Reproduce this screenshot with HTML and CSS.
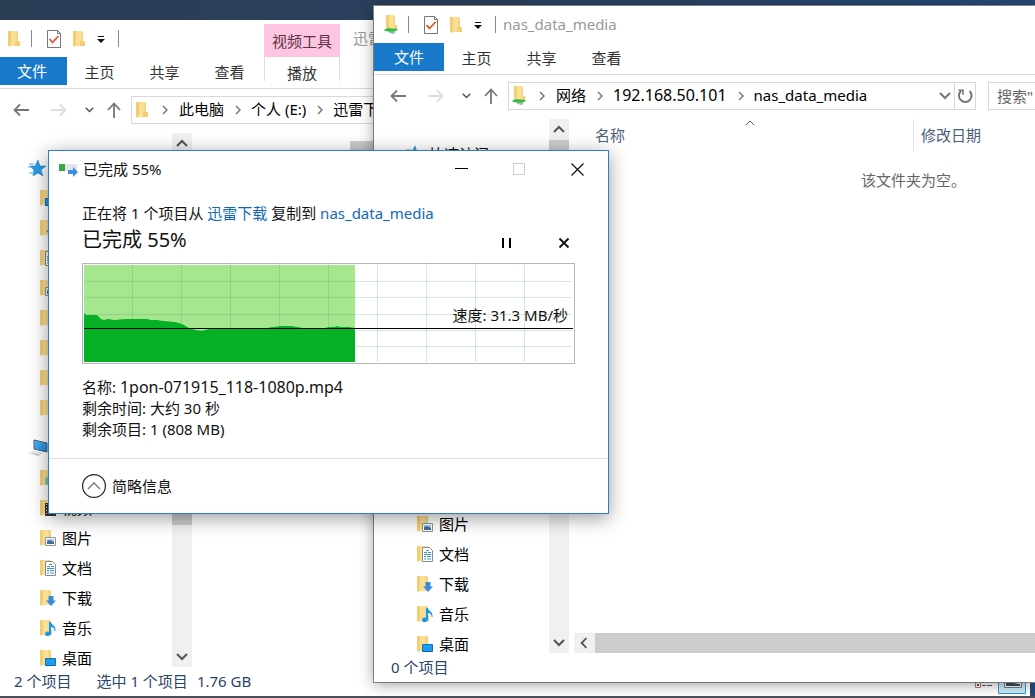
FILE: index.html
```
<!DOCTYPE html>
<html lang="zh-CN">
<head>
<meta charset="utf-8">
<title>nas_data_media</title>
<link rel="stylesheet" href="styles.css">
</head>
<body>
<svg class="sprite" aria-hidden="true">
  <defs>
    <linearGradient id="gold" x1="0" x2="1"><stop offset="0" stop-color="#f9dc8b"/><stop offset=".6" stop-color="#fbe09a"/><stop offset="1" stop-color="#edc664"/></linearGradient>
    <linearGradient id="screen" x1="0" y1="0" x2="1" y2="1"><stop offset="0" stop-color="#52b8f5"/><stop offset="1" stop-color="#1a84d8"/></linearGradient>
  </defs>
  <symbol id="folder" viewBox="0 0 16 16"><path d="M2 0h9l1 1v9h2v5H2z" fill="url(#gold)"/><path d="M2 0h3v11l-1 5-2-1z" fill="#f3cd72"/><path d="M9 10h5v5H9z" fill="#f1cd74"/></symbol>
  <symbol id="netfolder" viewBox="0 0 16 20"><path d="M3 0h8l1 1v9h2v4H3z" fill="url(#gold)"/><path d="M3 0h3v10l-1 4-2-1z" fill="#f3cd72"/><path d="M1 15l4-2 9 1 1 1-5 2-8-1z" fill="#38b84c"/><path d="M5 16h7l-1 3-4-1z" fill="#63c96c"/><path d="M7 17h6l-3 2z" fill="#a9b8b0"/></symbol>
  <symbol id="check" viewBox="0 0 16 18"><path d="M1.500.500h10l3 3v14h-13z" fill="#fff" stroke="#777"/><path d="M11.500.500v3h3" fill="none" stroke="#777"/><path d="M3.500 9l3 3.500 6-6.500" fill="none" stroke="#e0562b" stroke-width="1.800"/></symbol>
  <symbol id="more" viewBox="0 0 10 8"><path d="M2 1h6v1H2zM1 4h8L5 8z" fill="#111"/></symbol>
  <symbol id="back" viewBox="0 0 16 14"><path d="M16 7H1.500M7 1.500L1.500 7 7 12.500" fill="none" stroke="currentColor" stroke-width="1.800"/></symbol>
  <symbol id="up" viewBox="0 0 14 16"><path d="M7 16V1.500M1 8l6-6.500L13 8" fill="none" stroke="currentColor" stroke-width="1.800"/></symbol>
  <symbol id="right" viewBox="0 0 6 10"><path d="M1 1l4 4-4 4" fill="none" stroke="currentColor" stroke-width="1.500"/></symbol>
  <symbol id="down" viewBox="0 0 12 8"><path d="M1 1l5 5 5-5" fill="none" stroke="currentColor" stroke-width="2"/></symbol>
  <symbol id="reload" viewBox="0 0 16 16"><path d="M12.500 3A6.300 6.300 0 1 1 4 3" fill="none" stroke="currentColor" stroke-width="2"/><path d="M1.500 2.200h4.500v4.500" fill="none" stroke="currentColor" stroke-width="1.600"/></symbol>
  <symbol id="star" viewBox="0 0 20 18"><path d="M10 1l2 6 6 0-5 4 2 6-5-3-5 3 1-6-4-4h5z" fill="#2b9ce8" stroke="#1674ba" stroke-width=".5"/><path d="M1 5h5M0 8h3M1 14h4" stroke="#4fb0ee"/></symbol>
  <symbol id="pc" viewBox="0 0 20 18"><path d="M6 1l13 3v9L6 10z" fill="url(#screen)" stroke="#44607a"/><path d="M0 14l5-2 10 2-5 3z" fill="#c9cdd1"/><path d="M2 14l3-1 7 1.500" stroke="#fff" fill="none"/></symbol>
  <symbol id="plain" viewBox="0 0 16 16"><path d="M0 0h10l1 1v9h1v5H0z" fill="url(#gold)"/><path d="M0 0h3v11l-1 5-2-1z" fill="#f3cd72"/></symbol>
  <symbol id="pictures" viewBox="0 0 16 16"><use href="#plain"/><path d="M5.500 7.500h10v8h-10z" fill="#fff" stroke="#8b949c"/><path d="M7 9h7v5H7z" fill="#a9cde9"/><path d="M7 14v-3l3-1 4 2v2z" fill="#426e99"/></symbol>
  <symbol id="docs" viewBox="0 0 16 16"><use href="#plain"/><path d="M5.500 1.500h7l3 3v11h-10z" fill="#fff" stroke="#858d93"/><path d="M9 4.500h3M7 6.500h3M11 6.500h3M7 8.500h7M7 10.500h2M10 10.500h4M7 13h2M10 13h4" stroke="#3997cf"/></symbol>
  <symbol id="downloads" viewBox="0 0 16 16"><use href="#plain"/><path d="M8.500 6h5v4.500h2.500l-5 5.500-5-5.500h2.500z" fill="#3a8ddb"/></symbol>
  <symbol id="music" viewBox="0 0 16 16"><use href="#plain"/><path d="M9 2h2c0 3 5 3 4.500 9h-1c0-3-1.500-4-3.500-4v6c0 4-6 4-6 1 0-2 2-3 4-2z" fill="#1797ed"/></symbol>
  <symbol id="desk" viewBox="0 0 16 16"><use href="#plain"/><path d="M5.500 8.500h10v7h-10z" fill="#1d9cf0" stroke="#0876c3"/><path d="M6 15.500h9" stroke="#075b98" stroke-dasharray="2 1"/></symbol>
  <symbol id="videos" viewBox="0 0 16 16"><use href="#plain"/><path d="M5 3h11v13H5z" fill="#333"/><path d="M8 4h5v4H8zM8 10h5v4H8z" fill="#9bb"/><path d="M6.500 4v12" stroke="#ddd" stroke-dasharray="1 2"/></symbol>
  <symbol id="objects" viewBox="0 0 16 16"><use href="#plain"/><path d="M5 8l5-2 5 2v6l-5 2-5-2z" fill="#74cbb8"/></symbol>
</svg>

<main class="desktop">
  <section class="window window-local" aria-label="迅雷下载">
    <header class="titlebar">
      <svg class="i16"><use href="#folder"/></svg><span class="bar"></span>
      <svg class="i-check"><use href="#check"/></svg><svg class="i16 quick"><use href="#folder"/></svg><svg class="i-more"><use href="#more"/></svg><span class="bar last"></span>
      <span class="context">视频工具</span><span class="caption">迅雷下载</span>
    </header>
    <nav class="tabs">
      <button class="tab file">文件</button><button class="tab">主页</button><button class="tab">共享</button><button class="tab">查看</button><button class="tab play">播放</button>
    </nav>
    <div class="navbar">
      <button class="nav" aria-label="后退"><svg class="i-back"><use href="#back"/></svg></button>
      <button class="nav forward" aria-label="前进"><svg class="i-back flip"><use href="#back"/></svg></button>
      <button class="nav recent" aria-label="最近"><svg class="i-down small"><use href="#down"/></svg></button>
      <button class="nav upward" aria-label="向上"><svg class="i-up"><use href="#up"/></svg></button>
      <div class="address"><svg class="i-net"><use href="#folder"/></svg>
        <svg class="i-right"><use href="#right"/></svg><span>此电脑</span><svg class="i-right"><use href="#right"/></svg><span>个人 (E:)</span><svg class="i-right"><use href="#right"/></svg><span>迅雷下载</span></div>
    </div>
    <div class="content">
      <ul class="tree">
        <li class="root"><svg class="i18"><use href="#star"/></svg></li>
        <li><svg class="i16"><use href="#desk"/></svg></li>
        <li><svg class="i16"><use href="#downloads"/></svg></li>
        <li><svg class="i16"><use href="#docs"/></svg></li>
        <li><svg class="i16"><use href="#pictures"/></svg></li>
        <li><svg class="i16"><use href="#plain"/></svg></li>
        <li><svg class="i16"><use href="#plain"/></svg></li>
        <li><svg class="i16"><use href="#plain"/></svg></li>
        <li><svg class="i16"><use href="#plain"/></svg></li>
        <li class="root group"><svg class="i18"><use href="#pc"/></svg></li>
        <li><svg class="i16"><use href="#objects"/></svg></li>
        <li><svg class="i16"><use href="#videos"/></svg>视频</li>
        <li><svg class="i16"><use href="#pictures"/></svg>图片</li>
        <li><svg class="i16"><use href="#docs"/></svg>文档</li>
        <li><svg class="i16"><use href="#downloads"/></svg>下载</li>
        <li><svg class="i16"><use href="#music"/></svg>音乐</li>
        <li><svg class="i16"><use href="#desk"/></svg>桌面</li>
      </ul>
      <div class="vscroll"><svg class="i-down flipv"><use href="#down"/></svg><span class="thumb long"></span><svg class="i-down"><use href="#down"/></svg></div>
      <div class="files"><span class="preview"></span></div>
    </div>
    <footer class="status"><span>2 个项目</span><span class="second">选中 1 个项目</span><span class="size">1.76 GB</span>
      <svg class="views" viewBox="0 0 56 29"><path d="M1.500 16.500h5v5h-5z" fill="#fff" stroke="#b47b78"/><path d="M3 18h2v2H3z" fill="#a33"/><path d="M8 19.500h4M13 19.500h5" stroke="#555"/><path d="M24.500.500h27v27h-27z" fill="#cdebf9" stroke="#3298cc"/><path d="M30.500 9.500h17v12h-17z" fill="#fff" stroke="#68808e"/><path d="M32 16l14 2v2H32z" fill="#344f60"/></svg>
    </footer>
  </section>

  <section class="window window-nas" aria-label="nas_data_media">
    <header class="titlebar">
      <svg class="i16 net"><use href="#netfolder"/></svg><span class="bar"></span>
      <svg class="i-check"><use href="#check"/></svg><svg class="i16 quick"><use href="#folder"/></svg><svg class="i-more"><use href="#more"/></svg><span class="bar last"></span>
      <span class="caption">nas_data_media</span>
    </header>
    <nav class="tabs">
      <button class="tab file">文件</button><button class="tab">主页</button><button class="tab">共享</button><button class="tab">查看</button>
    </nav>
    <div class="navbar">
      <button class="nav" aria-label="后退"><svg class="i-back"><use href="#back"/></svg></button>
      <button class="nav forward" aria-label="前进"><svg class="i-back flip"><use href="#back"/></svg></button>
      <button class="nav recent" aria-label="最近"><svg class="i-down small"><use href="#down"/></svg></button>
      <button class="nav upward" aria-label="向上"><svg class="i-up"><use href="#up"/></svg></button>
      <div class="address"><svg class="i-net"><use href="#netfolder"/></svg>
        <svg class="i-right"><use href="#right"/></svg><span>网络</span><svg class="i-right"><use href="#right"/></svg><span class="host">192.168.50.101</span><svg class="i-right"><use href="#right"/></svg><span>nas_data_media</span>
        <button class="drop" aria-label="历史"><svg class="i-down"><use href="#down"/></svg></button><button class="reload" aria-label="刷新"><svg class="i16"><use href="#reload"/></svg></button></div>
      <input class="search" aria-label="搜索" placeholder="搜索&quot;">
    </div>
    <div class="content">
      <ul class="tree">
        <li class="root"><svg class="i18"><use href="#star"/></svg>快速访问</li>
        <li class="covered"></li>
        <li><svg class="i16"><use href="#pictures"/></svg>图片</li>
        <li><svg class="i16"><use href="#docs"/></svg>文档</li>
        <li><svg class="i16"><use href="#downloads"/></svg>下载</li>
        <li><svg class="i16"><use href="#music"/></svg>音乐</li>
        <li><svg class="i16"><use href="#desk"/></svg>桌面</li>
      </ul>
      <div class="vscroll"><svg class="i-down flipv"><use href="#down"/></svg><span class="thumb"></span><svg class="i-down"><use href="#down"/></svg></div>
      <div class="files">
        <div class="columns"><span class="col-name">名称<svg class="sort" viewBox="0 0 10 6"><path d="M1 5l4-4 4 4" fill="none" stroke="#555"/></svg></span><span class="col-date">修改日期</span></div>
        <p class="empty">该文件夹为空。</p>
        <div class="hscroll"><svg class="i-left"><use href="#right"/></svg><span class="hthumb"></span></div>
      </div>
    </div>
    <footer class="status"><span>0 个项目</span></footer>
  </section>

  <section class="dialog" role="dialog" aria-label="已完成 55%">
    <header class="dialog-title">
      <svg class="copy" viewBox="0 0 20 14"><path d="M1 1h18v7H1z" fill="#e2e5e8"/><path d="M1 1h6v7H1z" fill="#37a949"/><path d="M10 7h5V4l5 5-5 5v-3h-5z" fill="#3b8edb"/></svg>
      <span class="name">已完成 55%</span>
      <button class="win" aria-label="最小化"><svg viewBox="0 0 13 13"><path d="M0 5.500h13" stroke="#000"/></svg></button>
      <button class="win" aria-label="最大化" disabled><svg viewBox="0 0 13 13"><path d="M.500.500h11v11h-11z" fill="none" stroke="#ccc"/></svg></button>
      <button class="win" aria-label="关闭"><svg viewBox="0 0 13 13"><path d="M.500.500l12 12M12.500.500l-12 12" stroke="#111" stroke-width="1.200"/></svg></button>
    </header>
    <div class="dialog-body">
      <p class="route">正在将 1 个项目从 <a href="#">迅雷下载</a> 复制到 <a href="#">nas_data_media</a></p>
      <div class="progress"><h1>已完成 55%</h1>
        <button class="act" aria-label="暂停"><svg viewBox="0 0 12 12"><path d="M3 1v10M10 1v10" stroke="#000" stroke-width="2"/></svg></button>
        <button class="act" aria-label="取消"><svg viewBox="0 0 12 12"><path d="M1.500 1.500l9 9M10.500 1.500l-9 9" stroke="#111" stroke-width="1.800"/></svg></button></div>
      <div class="chart">
        <svg viewBox="0 0 491 99" preserveAspectRatio="none">
          <path d="M1 1h271v97H1z" fill="#a6e68f"/>
          <path d="M49.500 1v97M98.500 1v97M147.500 1v97M196.500 1v97M245.500 1v97M294.500 1v97M343.500 1v97M392.500 1v97M441.500 1v97M1 17.500h488M1 33.500h488M1 50.500h488M1 66.500h488M1 82.500h488" stroke="#2e8b57" stroke-opacity=".2" fill="none"/>
          <path d="M1 49L3 51H14L18 55L21 56L25 55L31 56L42 55H64L68 56H74L80 57L92 58L99 60L106 64L112 66L119 67L126 65L184 64L190 63L198 62H208L220 64L238 65L246 63H252L254 62L257 63H266L272 64V98H1z" fill="#06b025"/>
          <path d="M1 64.500h489" stroke="#000"/>
        </svg>
        <span class="speed">速度: 31.3 MB/秒</span>
      </div>
      <div class="details"><p>名称: <span class="filename">1pon-071915_118-1080p.mp4</span></p><p>剩余时间: 大约 30 秒</p><p>剩余项目: 1 (808 MB)</p></div>
    </div>
    <footer class="dialog-foot"><button class="less"><svg viewBox="0 0 24 24"><circle cx="12" cy="12" r="11.400" fill="#fff" stroke="#222" stroke-width="1.200"/><path d="M6 15l6-6 6 6" fill="none" stroke="#888" stroke-width="1.600"/></svg>简略信息</button></footer>
  </section>
</main>
</body>
</html>
```
FILE: styles.css
```
* { box-sizing: border-box; }
body { margin: 0; font: 15px/20px "Noto Sans", "Noto Sans CJK SC", sans-serif; color: #111; }
button, input { font: inherit; color: inherit; border: 0; padding: 0; background: none; }
p, h1, ul { margin: 0; padding: 0; }
svg { display: block; flex: none; }
.sprite { position: absolute; width: 0; height: 0; }

.desktop { position: relative; height: 100vh; overflow: hidden; background: linear-gradient(90deg, #2b3d55, #29415f 50%, #264a7a); }
.desktop::after { content: ""; position: absolute; inset: auto 0 0; height: 2px; background: #4b5058; }
.window { position: absolute; display: flex; flex-direction: column; background: #fff; overflow: hidden; white-space: nowrap; }
.window-local { inset: 20px 5px 2px -3px; }
.window-nas { inset: 6px 0 16px 374px; overflow: visible; box-shadow: 0 2px 14px rgba(0,0,0,.4), 0 0 0 1px #999; }

.i16 { width: 16px; height: 16px; }
.i18 { width: 20px; height: 18px; }
.i-check { width: 16px; height: 18px; }
.i-more { width: 10px; height: 8px; }
.i-back { width: 16px; height: 14px; }
.i-up { width: 14px; height: 16px; }
.i-right { width: 6px; height: 10px; color: #777; }
.i-left { width: 8px; height: 12px; color: #555; transform: scaleX(-1); }
.i-down { width: 12px; height: 8px; color: #555; }
.small { width: 9px; height: 6px; }
.i-net { width: 16px; height: 20px; }
.flip { transform: scaleX(-1); }
.flipv { transform: scaleY(-1); }

.titlebar { display: flex; align-items: center; height: 37px; padding-left: 9px; }
.net { height: 20px; }
.bar { width: 1px; height: 17px; margin: 0 14px 0 9px; background: #888; }
.quick { margin: 0 9px; }
.bar.last { margin: 0 7px 0 12px; }
.caption { padding-bottom: 2px; color: #999; }
.context { align-self: flex-end; width: 76px; height: 33px; margin: 0 13px 0 138px; background: #fec5e0; color: #5a3347; line-height: 34px; text-align: center; }

.tabs { display: flex; height: 32px; border-bottom: 1px solid #dadbdc; }
.tab { width: 65px; height: 30px; color: #333; }
.file { width: 70px; height: 28px; background: #1979ca; color: #fff; }
.play { width: 76px; height: 24px; margin-left: 2px; padding-top: 6px; border: solid #ddd; border-width: 0 1px; }

.navbar { display: flex; align-items: center; height: 42px; }
.navbar > .address, .search { height: 28px; border: 1px solid #d9d9d9; }
.nav { display: flex; margin-left: 16px; color: #777; }
.forward { margin-left: 22px; color: #ddd; }
.recent { margin-left: 18px; }
.upward { margin-left: 13px; }
.address { display: flex; align-items: center; flex: 1; min-width: 0; margin-left: 10px; padding-left: 2px; color: #000; }
.address span { padding-bottom: 2px; }
.host { font-size: 16px; }
.address .i-right { margin: 0 10px 0 11px; }
.address .i-net + .i-right { margin-left: 12px; margin-right: 11px; }
.drop { display: flex; margin-left: auto; margin-right: 3px; }
.drop svg, .reload svg { color: #777; }
.reload { display: flex; align-items: center; align-self: stretch; padding: 0 2px; border-left: 1px solid #d9d9d9; }
.search { flex: none; width: 47px; margin-left: 12px; padding-left: 8px; border-right: 0; }
.search::placeholder { color: #666; }

.content { display: flex; flex: 1; min-height: 0; margin-top: 2px; overflow: hidden; }
.tree { width: 175px; padding-top: 20px; list-style: none; flex: none; }
.tree li { display: flex; align-items: center; gap: 6px; height: 30px; padding-left: 43px; color: #000; }
.tree .root { padding-left: 31px; gap: 4px; }
.tree .group { margin-top: 10px; }
.tree .covered { height: 340px; }
.vscroll { display: flex; flex-direction: column; align-items: center; width: 20px; padding: 6px 0; background: #f0f0f0; flex: none; }
.vscroll .i-down:last-child { margin-top: auto; }
.thumb { width: 20px; height: 230px; margin-top: 7px; background: #cdcdcd; }
.thumb.long { height: 371px; }
.files { display: flex; flex-direction: column; flex: 1; min-width: 0; margin-left: 5px; }
.preview { width: 60px; height: 60px; margin: 8px 0 0 153px; background: #ccc; }
.columns { display: flex; height: 32px; line-height: 32px; color: #4c607a; }
.col-name { position: relative; width: 340px; padding-left: 21px; border-right: 1px solid #e3e3e3; }
.sort { position: absolute; top: 1px; left: 171px; width: 10px; height: 6px; }
.col-date { padding-left: 7px; }
.empty { padding: 19px 0 0 287px; color: #666; }
.hscroll { display: flex; align-items: center; height: 20px; margin-top: auto; background: #f0f0f0; padding-left: 6px; gap: 7px; }
.hthumb { flex: 1; height: 20px; background: #cdcdcd; }
.status { display: flex; align-items: center; height: 29px; padding-left: 17px; padding-bottom: 2px; color: #2b4469; flex: none; }
.second { margin-left: 25px; }
.size { margin-left: 9px; }
.views { width: 56px; height: 29px; margin-left: auto; }

.dialog { position: absolute; top: 150px; left: 48px; width: 561px; background: #fff; border: 1px solid #2b7fc4; box-shadow: 0 4px 18px rgba(0,0,0,.4); }
.dialog-title { display: flex; align-items: center; height: 37px; padding-left: 9px; padding-right: 2px; }
.copy { width: 20px; height: 14px; margin-right: 5px; }
.name { flex: 1; padding-bottom: 2px; }
.win { width: 58px; height: 37px; }
.win svg { width: 13px; height: 13px; margin: auto; }
.dialog-body { padding: 15px 33px 18px; }
.route { line-height: 21px; }
a { color: #1268b8; text-decoration: none; }
.progress { display: flex; align-items: flex-start; height: 33px; margin-top: 2px; margin-bottom: 4px; }
.progress h1 { flex: 1; font-size: 20px; font-weight: 400; line-height: 28px; }
.act { width: 58px; height: 34px; }
.act:last-child { margin-right: -18px; }
.act svg { width: 12px; height: 12px; margin: auto; }
.chart { position: relative; height: 101px; border: 1px solid #b5b9b5; }
.chart svg { width: 100%; height: 99px; }
.speed { position: absolute; right: 6px; top: 41px; }
.details { padding-top: 13px; line-height: 21px; }
.details p { height: 21px; }
.filename { font-size: 16px; }
.dialog-foot { padding: 15px 33px; border-top: 1px solid #dfdfdf; }
.less { display: flex; align-items: center; gap: 6px; height: 24px; }
.less svg { width: 24px; height: 24px; }
```
